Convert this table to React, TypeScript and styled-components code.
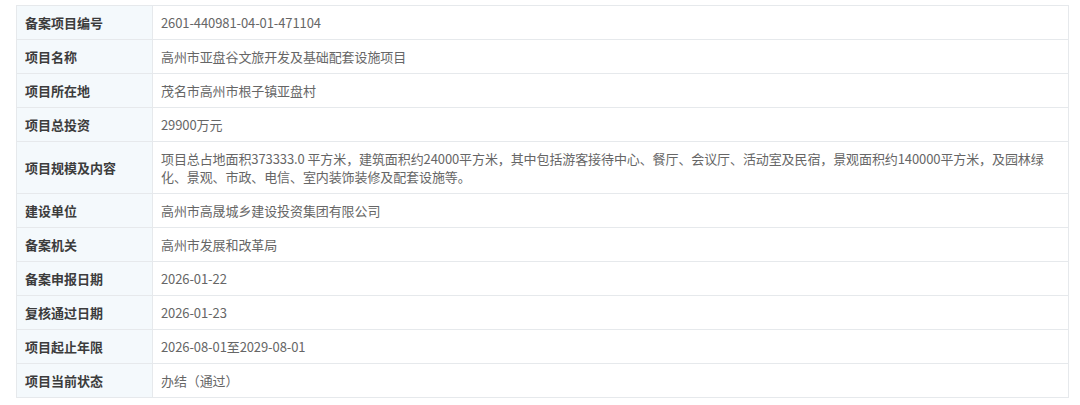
import React from 'react';
import styled, { createGlobalStyle } from 'styled-components';

const GlobalStyle = createGlobalStyle`
  html, body {
    margin: 0;
    padding: 0;
    background: #ffffff;
  }
  body {
    font-family: "Noto Sans CJK SC", "Noto Sans", sans-serif;
  }
`;

const Page = styled.div`
  width: 1080px;
  height: 405px;
  padding: 5px 11px 0 16px;
  box-sizing: border-box;
  background: #fff;
`;

const Table = styled.table`
  width: 100%;
  border-collapse: collapse;
  table-layout: fixed;
  font-size: 13px;
  line-height: 18px;
`;

const Label = styled.th`
  width: 136px;
  box-sizing: border-box;
  padding: 7.5px 8px;
  text-align: left;
  font-weight: bold;
  color: #3c3c3c;
  background: #f4f9fc;
  border: 1px solid #e6e9ec;
`;

const Value = styled.td`
  padding: 7.5px 0 7.5px 8px;
  color: #666;
  border: 1px solid #e6e9ec;
  letter-spacing: -0.1px;
`;

const rows: [string, string][] = [
  ['备案项目编号', '2601-440981-04-01-471104'],
  ['项目名称', '高州市亚盘谷文旅开发及基础配套设施项目'],
  ['项目所在地', '茂名市高州市根子镇亚盘村'],
  ['项目总投资', '29900万元'],
  [
    '项目规模及内容',
    '项目总占地面积373333.0 平方米，建筑面积约24000平方米，其中包括游客接待中心、餐厅、会议厅、活动室及民宿，景观面积约140000平方米，及园林绿化、景观、市政、电信、室内装饰装修及配套设施等。',
  ],
  ['建设单位', '高州市高晟城乡建设投资集团有限公司'],
  ['备案机关', '高州市发展和改革局'],
  ['备案申报日期', '2026-01-22'],
  ['复核通过日期', '2026-01-23'],
  ['项目起止年限', '2026-08-01至2029-08-01'],
  ['项目当前状态', '办结（通过）'],
];

const App = () => (
  <>
    <GlobalStyle />
    <Page>
      <Table>
        <tbody>
          {rows.map(([k, v]) => (
            <tr key={k}>
              <Label>{k}</Label>
              <Value>{v}</Value>
            </tr>
          ))}
        </tbody>
      </Table>
    </Page>
  </>
);

export default App;
